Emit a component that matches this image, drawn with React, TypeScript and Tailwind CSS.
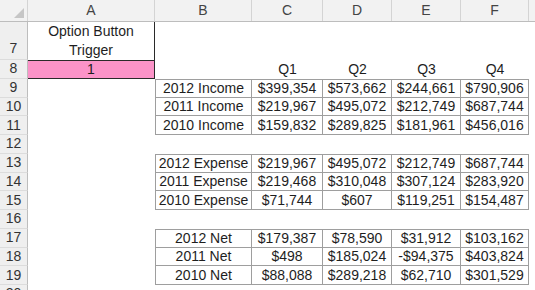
import React from "react";

// column widths for A..F, the sheet keeps going past F
const COLS = ["A", "B", "C", "D", "E", "F"];
const WIDTHS = ["w-[127px]", "w-[97px]", "w-[71px]", "w-[69px]", "w-[69px]", "w-[68px]"];

interface DataRow {
  n: number;
  label?: string;
  values?: string[];
  first?: boolean;
}

const ROWS: DataRow[] = [
  { n: 9, label: "2012 Income", values: ["$399,354", "$573,662", "$244,661", "$790,906"], first: true },
  { n: 10, label: "2011 Income", values: ["$219,967", "$495,072", "$212,749", "$687,744"] },
  { n: 11, label: "2010 Income", values: ["$159,832", "$289,825", "$181,961", "$456,016"] },
  { n: 12 },
  { n: 13, label: "2012 Expense", values: ["$219,967", "$495,072", "$212,749", "$687,744"], first: true },
  { n: 14, label: "2011 Expense", values: ["$219,468", "$310,048", "$307,124", "$283,920"] },
  { n: 15, label: "2010 Expense", values: ["$71,744", "$607", "$119,251", "$154,487"] },
  { n: 16 },
  { n: 17, label: "2012 Net", values: ["$179,387", "$78,590", "$31,912", "$103,162"], first: true },
  { n: 18, label: "2011 Net", values: ["$498", "$185,024", "-$94,375", "$403,824"] },
  { n: 19, label: "2010 Net", values: ["$88,088", "$289,218", "$62,710", "$301,529"] },
  { n: 20 },
];

const RowHead = ({ n, tall }: { n: number; tall?: boolean }) => (
  <div
    className={`flex w-[28px] shrink-0 justify-center border-b border-r border-b-[#dcdcdc] border-r-[#bdbdbd] bg-[#efefef] text-[#333] ${tall ? "items-end pb-[1px]" : "items-center"}`}
  >
    {n}
  </div>
);

export default function App() {
  return (
    <div
      className="h-[290px] w-[535px] overflow-hidden bg-white text-[14px] leading-[19px] text-[#1e1e1e]"
      style={{ fontFamily: '"Liberation Sans", Arial, sans-serif' }}
    >
      {/* column header */}
      <div className="flex h-[22px] border-b border-[#bdbdbd] bg-[#f2f2f2] text-[#444]">
        <div className="relative w-[28px] shrink-0 border-r border-[#d4d4d4]">
          <svg className="absolute bottom-[3px] right-[3px]" width="10" height="10" viewBox="0 0 10 10">
            <polygon points="10,0 10,10 0,10" fill="#c6c6c6" />
          </svg>
        </div>
        {COLS.map((c, i) => (
          <div key={c} className={`${WIDTHS[i]} flex shrink-0 items-center justify-center border-r border-[#d4d4d4]`}>
            {c}
          </div>
        ))}
        <div className="flex-1" />
      </div>

      {/* row 7 */}
      <div className="flex h-[38px]">
        <RowHead n={7} tall />
        <div className={`${WIDTHS[0]} flex shrink-0 items-end justify-center border-r border-[#2a2a2a] text-center`}>
          Option Button
          <br />
          Trigger
        </div>
        <div className="flex-1" />
      </div>

      {/* row 8 */}
      <div className="flex h-[18.75px]">
        <RowHead n={8} />
        <div className={`${WIDTHS[0]} flex shrink-0 items-center justify-center border-y border-r border-[#2a2a2a] bg-[#fb93c8]`}>
          1
        </div>
        <div className={`${WIDTHS[1]} shrink-0`} />
        {["Q1", "Q2", "Q3", "Q4"].map((q, i) => (
          <div key={q} className={`${WIDTHS[i + 2]} flex shrink-0 items-end justify-center`}>
            {q}
          </div>
        ))}
      </div>

      {ROWS.map((r) => (
        <div key={r.n} className="flex h-[18.75px]">
          <RowHead n={r.n} />
          <div className={`${WIDTHS[0]} shrink-0`} />
          {r.label && (
            <>
              <div
                className={`${WIDTHS[1]} flex shrink-0 items-center justify-center border-b border-l border-r border-[#9e9e9e] ${r.first ? "border-t" : ""}`}
              >
                {r.label}
              </div>
              {r.values!.map((v, i) => (
                <div
                  key={i}
                  className={`${WIDTHS[i + 2]} flex shrink-0 items-center justify-center border-b border-r border-[#9e9e9e] ${r.first ? "border-t" : ""}`}
                >
                  {v}
                </div>
              ))}
            </>
          )}
        </div>
      ))}
    </div>
  );
}
